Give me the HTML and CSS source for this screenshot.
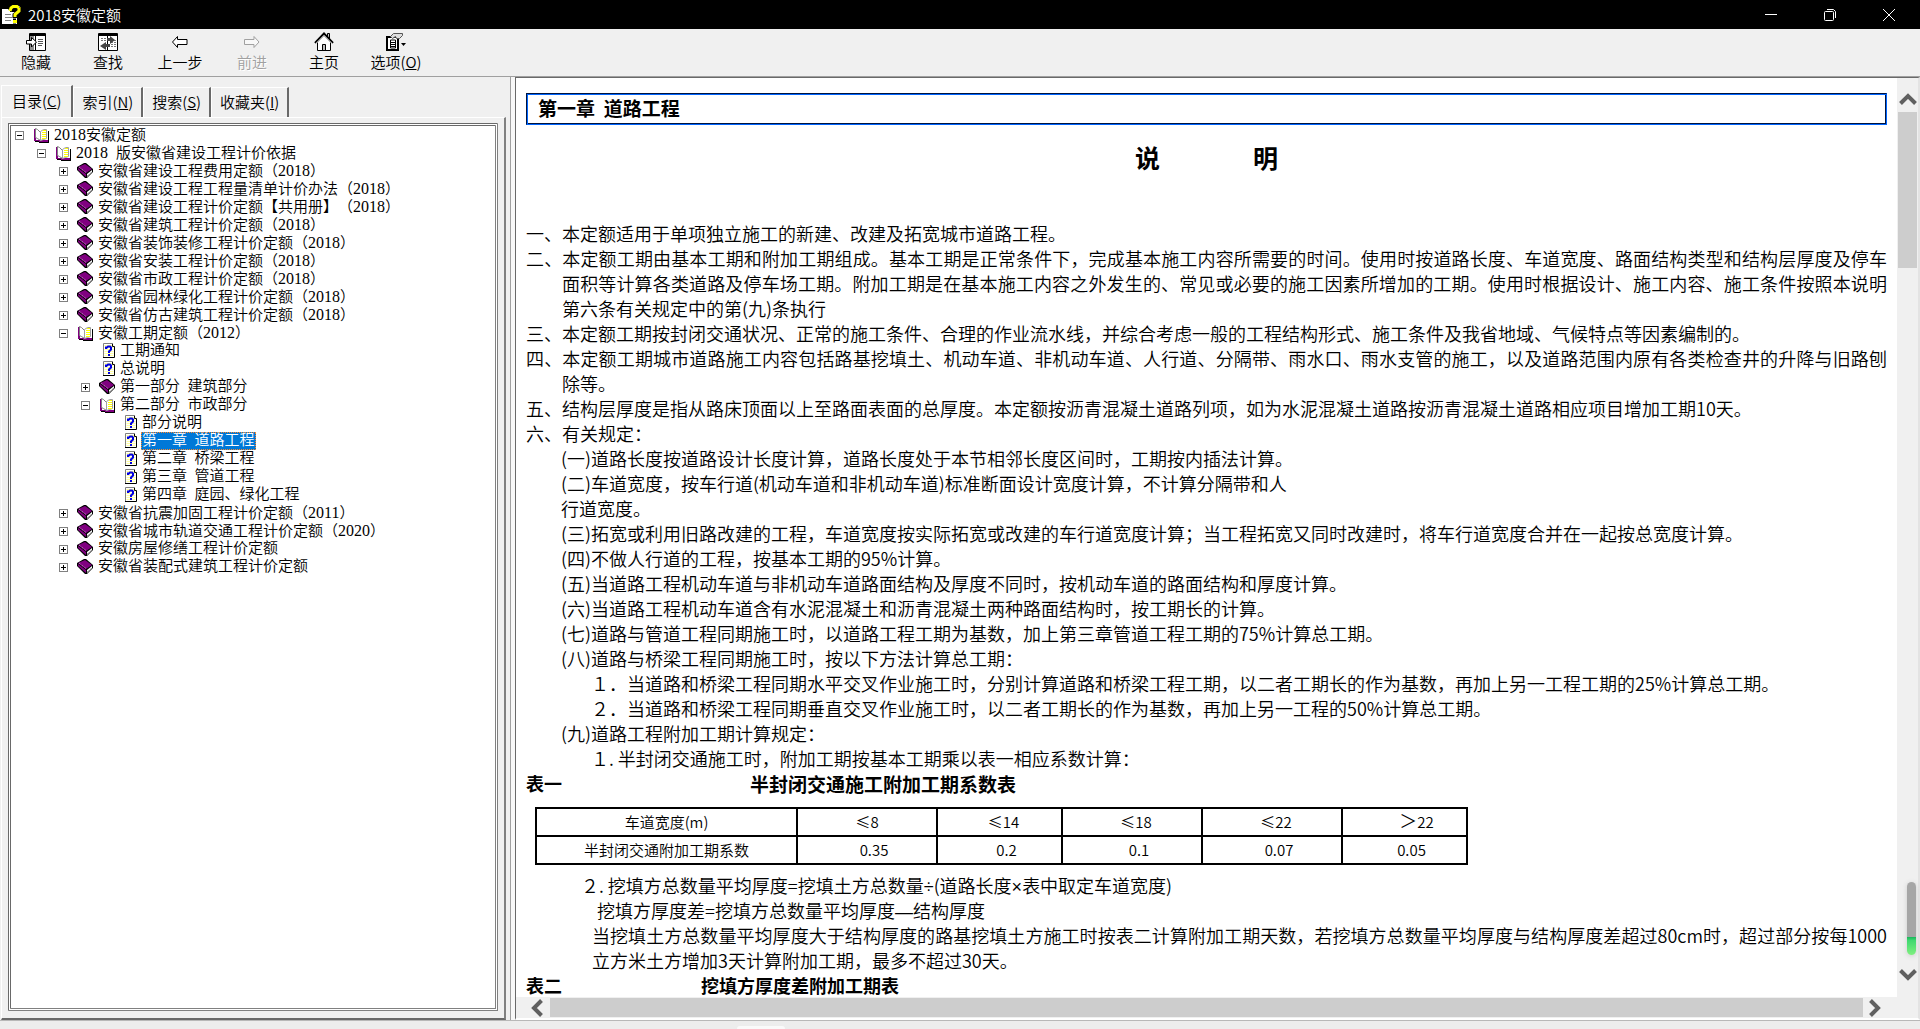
FILE: index.html
```html
<!DOCTYPE html>
<html lang="zh-CN">
<head>
<meta charset="utf-8">
<title>2018安徽定额</title>
<link rel="stylesheet" href="styles.css">
</head>
<body>
<svg class="sprite" aria-hidden="true">
  <symbol id="open" viewBox="0 0 16 16">
    <path fill="#000" d="M2 3h1v10h12V4h1v12H6v-1H2z"/>
    <path fill="#800080" d="M1 2h2v11h12v2H6v-1H1z"/>
    <path fill="#fff" stroke="#808080" d="M2.500 1.500l2 1 3 3v8l-3-2-2-1z"/>
    <path fill="#fff" stroke="#a0a0a0" d="M7.500 13.500v-9l3-2h3v9l-3 1z"/>
    <path stroke="#ff0" stroke-width="3" stroke-dasharray="1 1" d="M11.500 3v9"/>
    <path stroke="#ff0" stroke-dasharray="1 1" d="M9.500 5v8"/>
  </symbol>
  <symbol id="closed" viewBox="0 0 16 16">
    <path fill="#000" d="M7 0h2l7 6v3l-6 6H8L0 7V4z"/>
    <path fill="#800080" d="M8 1l7 5-6 4-8-6z"/>
    <path fill="#800080" d="M1 5l8 6v3L1 7z"/>
    <path fill="#fff" d="M10 11l5-4v2l-5 5z"/>
    <path stroke="#808080" stroke-dasharray="1 1" d="M10 13l5-4"/>
    <path fill="none" stroke="#d090d0" stroke-dasharray="1 1" d="M2 4l7 5.500"/>
  </symbol>
  <symbol id="page" viewBox="0 0 13 16">
    <path fill="#fff" stroke="#808080" d="M.5 15V.5H10"/>
    <path fill="#fff" d="M1 1h9v2h2v12H1z"/>
    <path stroke="#ffffa0" stroke-width="9" stroke-dasharray="1 1" d="M6 2v12"/>
    <path fill="none" stroke="#000" d="M9.500 1v2.500h2v11H0"/>
    <path fill="none" stroke="#0000e0" stroke-width="2" d="M3 6V4.500h1l1-1h2l1 1v2l-2 2V10M5 12h2"/>
  </symbol>
  <symbol id="up" viewBox="0 0 18 14"><path fill="none" stroke="#606060" stroke-width="4" d="M1.500 11.500L9 4l7.500 7.500"/></symbol>
</svg>

<header class="titlebar">
  <svg class="app-icon" viewBox="0 0 20 20">
    <path fill="#fff" d="M0 4h8v3h7v12H0z"/>
    <path stroke="#808080" d="M3 9.500h6M3 12.500h7M3 15.500h6"/>
    <path fill="none" stroke="#000" stroke-width="5" d="M9 5V3l2-1h4l2 1v4l-4 3v3M11 16h3"/>
    <path fill="none" stroke="#ff0" stroke-width="3" d="M8 6l1-3 2-1.500h4L17 3v3l-4 3.500V12M11 16.500h4"/>
    <path fill="none" stroke="#808080" d="M17.500 1v2"/>
  </svg>
  <h1>2018安徽定额</h1>
  <button class="win" aria-label="最小化"><svg viewBox="0 0 12 12"><path d="M0 5.500h12"/></svg></button>
  <button class="win" aria-label="还原"><svg viewBox="0 0 12 12"><rect x=".5" y="2.500" width="9" height="9" rx="1"/><path d="M3 .5h6.500l2 2V9"/></svg></button>
  <button class="win" aria-label="关闭"><svg viewBox="0 0 12 12"><path d="M0 0l12 12M12 0L0 12"/></svg></button>
</header>

<nav class="toolbar">
  <button><svg viewBox="0 0 20 20"><path fill="#fff" stroke="#000" d="M3.500 1.500h16v17h-16z"/><path fill="#909090" d="M4 4h4v14H4z"/><path stroke="#000" d="M3 2.500h17M3 3.500h17M9.500 3v15"/><path stroke="#555" d="M12 7.500h5M12 9.500h5M12 11.500h5M12 13.500h4"/><path fill="#fff" stroke="#000" d="M.5 8.500h5v-3l5 4.500-5 5v-3h-5z"/></svg>隐藏</button>
  <button><svg viewBox="0 0 20 20"><path fill="#fff" stroke="#000" d="M.5 1.500h19v17H.5z"/><path stroke="#000" d="M0 2.500h20M0 3.500h20M9.500 3v15"/><path stroke="#777" stroke-dasharray="2 1" d="M3 6.500h6M3 8.500h6M13 8.500h5M13 10.500h5M13 14.500h5M13 12.500h5"/><path fill="#444" d="M9 6h3V4l5 4-5 4V9H9zM12 12H8v-2l-6 4 6 4v-3h4z"/></svg>查找</button>
  <button><svg viewBox="0 0 20 20"><path fill="#fff" stroke="#000" d="M2.500 10l5-5.500v3H17v5H7.500v3z"/></svg>上一步</button>
  <button disabled><svg viewBox="0 0 20 20"><path fill="#f8f8f8" stroke="#a0a0a0" d="M17 10l-5-5.500v3H2.500v5H12v3z"/></svg>前进</button>
  <button><svg viewBox="0 0 20 20"><path fill="#fff" stroke="#000" d="M3.500 10v8.500h13V10L10 3.500z"/><path fill="#c0c0c0" stroke="#000" d="M13.500 5V1.500h2V7M8.500 18v-5.500h3V18"/><path fill="none" stroke="#000" stroke-width="2" d="M1 11l9-9.500 9 9.500"/><path fill="none" stroke="#fff" d="M2 11.500l8-8 8 8"/></svg>主页</button>
  <button><svg viewBox="0 0 20 20"><path fill="#fff" stroke="#000" stroke-width="2" d="M1 5h11v13H1z"/><path fill="none" stroke="#000" d="M4.500 8h5v8h-5zM5 10.500h4M5 12.500h4M5 14.500h4"/><path fill="#ddd" stroke="#555" d="M7.500 1.500h9v2l-3 3h-3l-1-2-3 2-2-2z"/><path d="M15 11h5l-2.500 3z"/></svg><span>选项(<u>O</u>)</span></button>
</nav>

<main class="workspace">
  <aside class="sidebar">
    <div class="tabs" role="tablist">
      <button role="tab" aria-selected="true">目录(<u>C</u>)</button>
      <button role="tab">索引(<u>N</u>)</button>
      <button role="tab">搜索(<u>S</u>)</button>
      <button role="tab">收藏夹(<u>I</u>)</button>
    </div>
    <div class="panel">
      <div class="tree-box">
        <ul class="tree">
          <li><div class="row"><button class="box minus" aria-label="折叠"></button><svg class="ico"><use href="#open"/></svg><a href="#"><span class="n">2018</span>安徽定额</a></div>
          <ul>
            <li><div class="row"><button class="box minus" aria-label="折叠"></button><svg class="ico"><use href="#open"/></svg><a href="#"><span class="n">2018  </span>版安徽省建设工程计价依据</a></div>
            <ul>
              <li class="row"><button class="box plus" aria-label="展开"></button><svg class="ico"><use href="#closed"/></svg><a href="#">安徽省建设工程费用定额（<span class="n">2018</span>）</a></li>
              <li class="row"><button class="box plus" aria-label="展开"></button><svg class="ico"><use href="#closed"/></svg><a href="#">安徽省建设工程工程量清单计价办法（<span class="n">2018</span>）</a></li>
              <li class="row"><button class="box plus" aria-label="展开"></button><svg class="ico"><use href="#closed"/></svg><a href="#">安徽省建设工程计价定额【共用册】（<span class="n">2018</span>）</a></li>
              <li class="row"><button class="box plus" aria-label="展开"></button><svg class="ico"><use href="#closed"/></svg><a href="#">安徽省建筑工程计价定额（<span class="n">2018</span>）</a></li>
              <li class="row"><button class="box plus" aria-label="展开"></button><svg class="ico"><use href="#closed"/></svg><a href="#">安徽省装饰装修工程计价定额（<span class="n">2018</span>）</a></li>
              <li class="row"><button class="box plus" aria-label="展开"></button><svg class="ico"><use href="#closed"/></svg><a href="#">安徽省安装工程计价定额（<span class="n">2018</span>）</a></li>
              <li class="row"><button class="box plus" aria-label="展开"></button><svg class="ico"><use href="#closed"/></svg><a href="#">安徽省市政工程计价定额（<span class="n">2018</span>）</a></li>
              <li class="row"><button class="box plus" aria-label="展开"></button><svg class="ico"><use href="#closed"/></svg><a href="#">安徽省园林绿化工程计价定额（<span class="n">2018</span>）</a></li>
              <li class="row"><button class="box plus" aria-label="展开"></button><svg class="ico"><use href="#closed"/></svg><a href="#">安徽省仿古建筑工程计价定额（<span class="n">2018</span>）</a></li>
              <li><div class="row"><button class="box minus" aria-label="折叠"></button><svg class="ico"><use href="#open"/></svg><a href="#">安徽工期定额（<span class="n">2012</span>）</a></div>
              <ul>
                <li class="row leaf"><svg class="ico"><use href="#page"/></svg><a href="#">工期通知</a></li>
                <li class="row leaf"><svg class="ico"><use href="#page"/></svg><a href="#">总说明</a></li>
                <li class="row"><button class="box plus" aria-label="展开"></button><svg class="ico"><use href="#closed"/></svg><a href="#">第一部分  建筑部分</a></li>
                <li><div class="row"><button class="box minus" aria-label="折叠"></button><svg class="ico"><use href="#open"/></svg><a href="#">第二部分  市政部分</a></div>
                <ul>
                  <li class="row leaf"><svg class="ico"><use href="#page"/></svg><a href="#">部分说明</a></li>
                  <li class="row leaf"><svg class="ico"><use href="#page"/></svg><a href="#" class="selected">第一章  道路工程</a></li>
                  <li class="row leaf"><svg class="ico"><use href="#page"/></svg><a href="#">第二章  桥梁工程</a></li>
                  <li class="row leaf"><svg class="ico"><use href="#page"/></svg><a href="#">第三章  管道工程</a></li>
                  <li class="row leaf"><svg class="ico"><use href="#page"/></svg><a href="#">第四章  庭园、绿化工程</a></li>
                </ul></li>
              </ul></li>
              <li class="row"><button class="box plus" aria-label="展开"></button><svg class="ico"><use href="#closed"/></svg><a href="#">安徽省抗震加固工程计价定额（<span class="n">2011</span>）</a></li>
              <li class="row"><button class="box plus" aria-label="展开"></button><svg class="ico"><use href="#closed"/></svg><a href="#">安徽省城市轨道交通工程计价定额（<span class="n">2020</span>）</a></li>
              <li class="row"><button class="box plus" aria-label="展开"></button><svg class="ico"><use href="#closed"/></svg><a href="#">安徽房屋修缮工程计价定额</a></li>
              <li class="row"><button class="box plus" aria-label="展开"></button><svg class="ico"><use href="#closed"/></svg><a href="#">安徽省装配式建筑工程计价定额</a></li>
            </ul></li>
          </ul></li>
        </ul>
      </div>
    </div>
  </aside>
  <div class="splitter"></div>

  <section class="viewer">
    <article class="doc">
      <h2>第一章  道路工程</h2>
      <h3><span>说</span><span>明</span></h3>
      <p class="hang">一、本定额适用于单项独立施工的新建、改建及拓宽城市道路工程。</p>
      <p class="hang">二、本定额工期由基本工期和附加工期组成。基本工期是正常条件下，完成基本施工内容所需要的时间。使用时按道路长度、车道宽度、路面结构类型和结构层厚度及停车面积等计算各类道路及停车场工期。附加工期是在基本施工内容之外发生的、常见或必要的施工因素所增加的工期。使用时根据设计、施工内容、施工条件按照本说明第六条有关规定中的第(九)条执行</p>
      <p class="hang">三、本定额工期按封闭交通状况、正常的施工条件、合理的作业流水线，并综合考虑一般的工程结构形式、施工条件及我省地域、气候特点等因素编制的。</p>
      <p class="hang">四、本定额工期城市道路施工内容包括路基挖填土、机动车道、非机动车道、人行道、分隔带、雨水口、雨水支管的施工，以及道路范围内原有各类检查井的升降与旧路刨除等。</p>
      <p class="hang">五、结构层厚度是指从路床顶面以上至路面表面的总厚度。本定额按沥青混凝土道路列项，如为水泥混凝土道路按沥青混凝土道路相应项目增加工期10天。</p>
      <p class="hang">六、有关规定：</p>
      <div class="clauses">
        <p>(一)道路长度按道路设计长度计算，道路长度处于本节相邻长度区间时，工期按内插法计算。</p>
        <p>(二)车道宽度，按车行道(机动车道和非机动车道)标准断面设计宽度计算，不计算分隔带和人<br>行道宽度。</p>
        <p>(三)拓宽或利用旧路改建的工程，车道宽度按实际拓宽或改建的车行道宽度计算；当工程拓宽又同时改建时，将车行道宽度合并在一起按总宽度计算。</p>
        <p>(四)不做人行道的工程，按基本工期的95%计算。</p>
        <p>(五)当道路工程机动车道与非机动车道路面结构及厚度不同时，按机动车道的路面结构和厚度计算。</p>
        <p>(六)当道路工程机动车道含有水泥混凝土和沥青混凝土两种路面结构时，按工期长的计算。</p>
        <p>(七)道路与管道工程同期施工时，以道路工程工期为基数，加上第三章管道工程工期的75%计算总工期。</p>
        <p>(八)道路与桥梁工程同期施工时，按以下方法计算总工期：</p>
        <p class="sub">１．当道路和桥梁工程同期水平交叉作业施工时，分别计算道路和桥梁工程工期，以二者工期长的作为基数，再加上另一工程工期的25%计算总工期。</p>
        <p class="sub">２．当道路和桥梁工程同期垂直交叉作业施工时，以二者工期长的作为基数，再加上另一工程的50%计算总工期。</p>
        <p>(九)道路工程附加工期计算规定：</p>
        <p class="sub">１. 半封闭交通施工时，附加工期按基本工期乘以表一相应系数计算：</p>
      </div>
      <div class="caption"><strong>表一</strong><strong class="wide">半封闭交通施工附加工期系数表</strong></div>
      <table>
        <colgroup><col class="c-name"><col class="c-wide"><col class="c-slim"><col class="c-wide"><col class="c-wide"><col class="c-slim"></colgroup>
        <tr><th>车道宽度(m)</th><td class="near">≤8</td><td>≤14</td><td>≤18</td><td>≤22</td><td class="far"><span class="gt">＞</span>22</td></tr>
        <tr class="values"><th>半封闭交通附加工期系数</th><td>0.35</td><td>0.2</td><td>0.1</td><td>0.07</td><td>0.05</td></tr>
      </table>
      <div class="notes">
        <p class="out">２. 挖填方总数量平均厚度=挖填土方总数量<span class="latin">÷</span>(道路长度<span class="latin">×</span>表中取定车道宽度)</p>
        <p class="in">挖填方厚度差=挖填方总数量平均厚度<span class="latin">—</span>结构厚度</p>
        <p>当挖填土方总数量平均厚度大于结构厚度的路基挖填土方施工时按表二计算附加工期天数，若挖填方总数量平均厚度与结构厚度差超过80cm时，超过部分按每1000立方米土方增加3天计算附加工期，最多不超过30天。</p>
      </div>
      <div class="caption"><strong>表二</strong><strong class="second">挖填方厚度差附加工期表</strong></div>
    </article>
    <div class="vbar">
      <button aria-label="向上"><svg viewBox="0 0 18 14"><use href="#up"/></svg></button>
      <div class="thumb"></div>
      <button class="down" aria-label="向下"><svg viewBox="0 0 18 14"><use href="#up"/></svg></button>
      <div class="gauge"></div>
    </div>
    <div class="hbar">
      <button class="left" aria-label="向左"><svg viewBox="0 0 18 14"><use href="#up"/></svg></button>
      <div class="thumb"></div>
      <button class="right" aria-label="向右"><svg viewBox="0 0 18 14"><use href="#up"/></svg></button>
    </div>
  </section>
</main>
<footer class="edge"><div class="pill"></div></footer>
</body>
</html>
```
FILE: styles.css
```css
* { box-sizing: border-box; }

body {
  margin: 0;
  height: 100vh;
  display: flex;
  flex-direction: column;
  overflow: hidden;
  background: #f0f0f0;
  color: #000;
  font: 350 15px/20px "Noto Sans CJK SC", sans-serif;
  text-spacing-trim: space-all;
}

button {
  border: 0;
  padding: 0;
  background: none;
  color: inherit;
  font: inherit;
}

h1, h2, h3, p, ul { margin: 0; padding: 0; }
.sprite { position: absolute; width: 0; height: 0; }

/* Title bar */
.titlebar {
  flex: none;
  height: 29px;
  display: flex;
  align-items: center;
  background: #000;
  color: #fff;
}
.app-icon { width: 20px; height: 20px; margin: 0 6px 0 2px; }
.titlebar h1 { flex: 1; font-size: 15px; font-weight: 350; }
.win { width: 59px; height: 29px; }
.win svg { width: 12px; height: 12px; display: block; margin: auto; fill: none; stroke: #fff; }
.win:last-child { margin-right: 2px; }

/* Toolbar */
.toolbar {
  flex: none;
  height: 48px;
  display: flex;
  border-bottom: 1px solid #a0a0a0;
}
.toolbar button {
  width: 72px;
  padding-top: 3px;
  display: flex;
  flex-direction: column;
  align-items: center;
}
.toolbar svg { width: 20px; height: 20px; }
.toolbar button:disabled { color: #a0a0a0; text-shadow: 1px 1px #fff; }

/* Panes */
.workspace { flex: 1; min-height: 0; display: flex; }
.sidebar {
  flex: none;
  width: 506px;
  padding: 8px 0 0 1px;
  display: flex;
  flex-direction: column;
}
.splitter {
  flex: none;
  width: 5px;
  margin-left: 4px;
  border-left: 1px solid #a0a0a0;
  background: #f8f8f8;
}
.tabs { display: flex; align-items: flex-end; }
.tabs button {
  height: 30px;
  padding: 0 8px 2px;
  border: solid;
  border-width: 1px 2px 0 1px;
  border-color: #fff #696969 #fff #fff;
}
.tabs button[aria-selected="true"] {
  height: 32px;
  padding: 0 10px 2px;
}
.panel {
  flex: 1;
  min-height: 0;
  padding: 5px 6px 7px 6px;
  border: solid;
  border-width: 1px 2px 2px 1px;
  border-color: #fff #808080 #696969 #fff;
  display: flex;
}
.tree-box {
  flex: 1;
  overflow: hidden;
  border: 3px double #696969;
  border-right-color: #808080;
  border-bottom-color: #808080;
  background: #fff;
}

/* Contents tree */
.tree, .tree ul { list-style: none; }
.tree { padding-left: 4px; }
.tree ul { padding-left: 22px; }
.row { display: flex; align-items: center; height: 18px; }
.row .ico { width: 16px; height: 16px; margin: 0 4px 0 9px; }
.row.leaf .ico { width: 13px; margin: 0 3px 0 22px; }
.row a {
  height: 18px;
  padding: 0 1px;
  color: #000;
  font-family: "Liberation Serif", "Noto Sans CJK SC", serif;
  line-height: 17px;
  text-decoration: none;
  white-space: pre;
}
.row .n { font-size: 16px; }
.row a.selected {
  background: #0078d7;
  color: #fff;
  outline: 1px dotted #ff8728;
  outline-offset: -1px;
}
.box {
  width: 9px;
  height: 9px;
  border: 1px solid #808080;
  background: linear-gradient(#000, #000) center / 5px 1px no-repeat;
}
.box.plus {
  background:
    linear-gradient(#000, #000) center / 5px 1px no-repeat,
    linear-gradient(#000, #000) center / 1px 5px no-repeat;
}

/* Document viewer */
.viewer {
  flex: 1;
  min-width: 0;
  display: grid;
  grid-template: minmax(0, 1fr) 21px / minmax(0, 1fr) 21px;
  border-style: solid;
  border-width: 1px 2px 2px 1px;
  border-color: #696969 #e3e3e3 #fff #696969;
}
.doc {
  overflow: hidden;
  padding: 15px 10px 0;
  background: #fff;
  font-size: 18px;
  line-height: 25px;
}
.doc h2 {
  height: 32px;
  padding-left: 11px;
  border: 1px solid;
  border-color: #001440 #0066ff #0066ff #001440;
  box-shadow: inset 1px 1px #0066ff, inset -1px -1px #001440;
  font-size: 19px;
  line-height: 27px;
  white-space: pre;
}
.doc h3 {
  display: flex;
  justify-content: center;
  gap: 93px;
  padding: 14px 0 46px;
  font-size: 25px;
  line-height: 36px;
}
.doc p { text-align: justify; }
.hang { padding-left: 36px; text-indent: -36px; }
.clauses { padding-left: 35px; }
.clauses .sub { padding-left: 30px; }
.latin { font-family: "Liberation Sans", sans-serif; line-height: 20px; }
.caption { display: flex; align-items: center; height: 24px; }
.caption .wide { padding-left: 188px; font-size: 19px; }
.caption .second { padding-left: 139px; }

table {
  width: 932px;
  margin: 12px 0 8px 9px;
  table-layout: fixed;
  border-collapse: collapse;
  font-size: 15px;
  line-height: 26px;
}
.c-name { width: 261px; }
.c-wide { width: 140px; }
.c-slim { width: 125px; }
th, td {
  padding: 0 0 0 8px;
  border: 2px solid #000;
  font-weight: inherit;
  text-align: center;
}
th, .near { padding: 0; }
.far { padding-left: 24px; }
.values td { padding-left: 14px; }
.gt { font-size: 18px; line-height: 20px; }

.notes { padding-left: 66px; }
.notes .out { margin-left: -11px; }
.notes .in { margin-left: 5px; }

/* Scroll bars */
.vbar, .hbar { display: flex; }
.vbar { position: relative; flex-direction: column; align-items: center; }
.hbar { align-items: center; padding: 0 34px 0 8px; grid-column: 1 / -1; }
.vbar button { width: 18px; height: 14px; margin: 14px 0 6px; }
.vbar button.down { margin: auto 0 15px; }
.vbar button svg, .hbar button svg { display: block; width: 18px; height: 14px; }
.vbar .thumb { width: 19px; height: 156px; background: #cdcdcd; }
.down svg { transform: rotate(180deg); }
.hbar button { width: 26px; }
.hbar .right { width: 18px; }
.hbar .left svg { transform: rotate(-90deg); margin-left: 4px; }
.hbar .right svg { transform: rotate(90deg); }
.hbar .thumb { flex: 1; height: 19px; margin-right: 3px; background: #cdcdcd; }
.gauge {
  position: absolute;
  right: 2px;
  bottom: 42px;
  width: 9px;
  height: 73px;
  border-radius: 5px;
  background: linear-gradient(#a6a6a6 75%, #14b45a 75%, #40d870 80%, #80f080);
  box-shadow: 0 1px 5px #ccc;
}

.edge { flex: none; height: 9px; border-top: 1px solid #b8b8b8; background: #ededed; }
.pill { width: 48px; height: 3px; margin: 5px 0 0 737px; border-radius: 3px 3px 0 0; background: #fafafa; }
```
